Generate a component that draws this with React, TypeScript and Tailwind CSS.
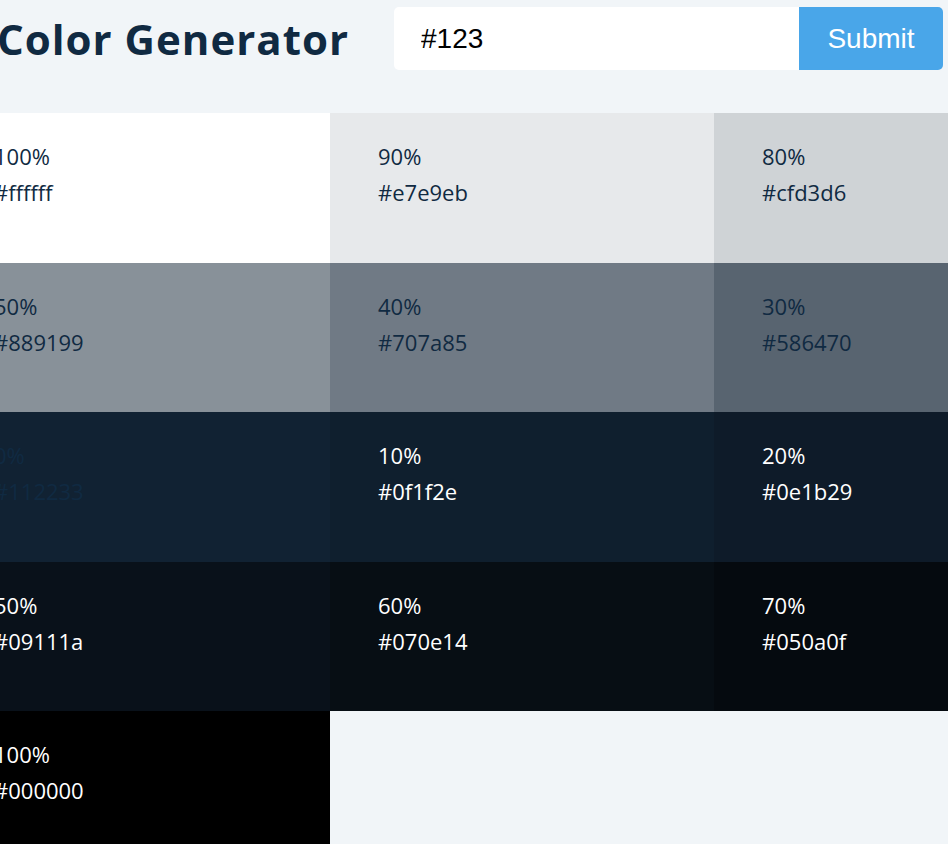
const swatches = [
  { weight: 100, hex: "ffffff" },
  { weight: 90, hex: "e7e9eb" },
  { weight: 80, hex: "cfd3d6" },
  { weight: 70, hex: "b8bdc2" },
  { weight: 60, hex: "a0a7ad" },
  { weight: 50, hex: "889199" },
  { weight: 40, hex: "707a85" },
  { weight: 30, hex: "586470" },
  { weight: 20, hex: "414e5c" },
  { weight: 10, hex: "293847" },
  { weight: 0, hex: "112233" },
  { weight: 10, hex: "0f1f2e" },
  { weight: 20, hex: "0e1b29" },
  { weight: 30, hex: "0c1824" },
  { weight: 40, hex: "0a141f" },
  { weight: 50, hex: "09111a" },
  { weight: 60, hex: "070e14" },
  { weight: 70, hex: "050a0f" },
  { weight: 80, hex: "03070a" },
  { weight: 90, hex: "020305" },
  { weight: 100, hex: "000000" },
];

const SingleColor = ({
  weight,
  hex,
  light,
}: {
  weight: number;
  hex: string;
  light: boolean;
}) => (
  <article
    className={`px-12 pt-[25px] text-[22px] leading-[36px] ${
      light ? "text-white" : "text-[#102a42]"
    }`}
    style={{ backgroundColor: `#${hex}` }}
  >
    <p>{weight}%</p>
    <p>#{hex}</p>
  </article>
);

export default function App() {
  return (
    <div
      className="min-h-screen w-full overflow-hidden bg-[#f1f5f8]"
      style={{ fontFamily: '"Open Sans", "Noto Sans", sans-serif' }}
    >
      <section className="flex h-[77px] items-center">
        <h3 className="-ml-[3px] w-[397px] shrink-0 text-[42px] font-bold leading-none tracking-[1px] text-[#102a42]">
          Color Generator
        </h3>
        <form className="flex h-[63px]" onSubmit={(e) => e.preventDefault()}>
          <input
            type="text"
            defaultValue="#123"
            className="h-full w-[405px] rounded-l-[5px] border-0 bg-white px-[27px] text-[28px] text-black outline-none"
            style={{ fontFamily: '"Liberation Sans", Arial, sans-serif' }}
          />
          <button
            type="submit"
            className="h-full w-[144px] rounded-r-[5px] bg-[#49a6e9] text-[28px] text-white"
            style={{ fontFamily: '"Liberation Sans", Arial, sans-serif' }}
          >
            Submit
          </button>
        </form>
      </section>

      {/* tints, base, shades */}
      <section className="mt-[36px] -ml-[54px] grid w-[1920px] grid-cols-[repeat(5,384px)] auto-rows-[149.5px]">
        {swatches.map((c, i) => (
          <SingleColor key={i} weight={c.weight} hex={c.hex} light={i > 10} />
        ))}
      </section>
    </div>
  );
}
